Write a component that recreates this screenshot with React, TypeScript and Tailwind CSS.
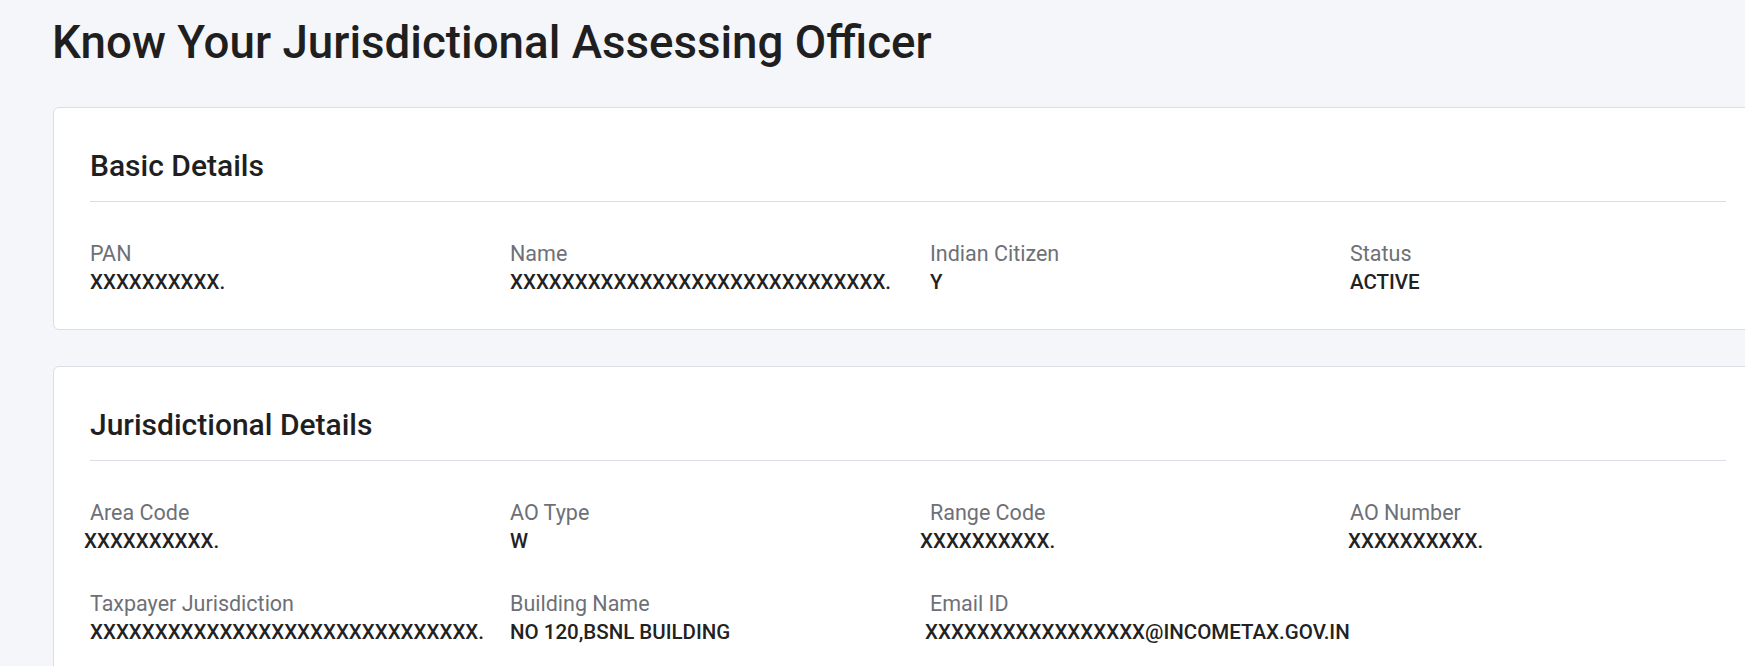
type Field = {
  label: string;
  value: string;
  shift?: string;
};

const basic: Field[] = [
  { label: "PAN", value: "XXXXXXXXXX." },
  { label: "Name", value: "XXXXXXXXXXXXXXXXXXXXXXXXXXXXX." },
  { label: "Indian Citizen", value: "Y" },
  { label: "Status", value: "ACTIVE" },
];

const jurisdiction: Field[] = [
  { label: "Area Code", value: "XXXXXXXXXX.", shift: "-ml-[6px]" },
  { label: "AO Type", value: "W" },
  { label: "Range Code", value: "XXXXXXXXXX.", shift: "-ml-[10px]" },
  { label: "AO Number", value: "XXXXXXXXXX.", shift: "-ml-[2px]" },
  { label: "Taxpayer Jurisdiction", value: "XXXXXXXXXXXXXXXXXXXXXXXXXXXXXX." },
  { label: "Building Name", value: "NO 120,BSNL BUILDING" },
  { label: "Email ID", value: "XXXXXXXXXXXXXXXXX@INCOMETAX.GOV.IN", shift: "-ml-[5px]" },
];

function Card({ title, fields }: { title: string; fields: Field[] }) {
  return (
    <section className="w-[1710px] rounded-md border border-[#dcdde7] bg-white px-[36px] pt-[40px] pb-[35px]">
      <h2 className="text-[30px] leading-[36px] font-medium text-[#1f1f1f]">{title}</h2>
      <div className="mt-[17px] h-px bg-[#dcdde8]" />
      <div className="mt-[39px] grid grid-cols-[420px_420px_420px_420px] gap-y-[38px]">
        {fields.map((f) => (
          <div key={f.label}>
            <div className="text-[21.5px] leading-[26px] font-normal text-[#6e7077]">{f.label}</div>
            <div
              className={`mt-[3px] whitespace-nowrap text-[20.5px] leading-6 font-medium text-[#222222] ${f.shift ?? ""}`}
            >
              {f.value}
            </div>
          </div>
        ))}
      </div>
    </section>
  );
}

export default function App() {
  return (
    <div
      className="min-h-screen w-full overflow-hidden bg-[#f5f6fa]"
      style={{ fontFamily: "Roboto, 'Noto Sans', sans-serif" }}
    >
      <div className="w-[1800px] pl-[52px] pt-[16px] pb-10">
        <h1 className="text-[45.7px] leading-[54px] font-medium text-[#1f1f1f]">
          Know Your Jurisdictional Assessing Officer
        </h1>
        <div className="mt-[37px] pl-px">
          <Card title="Basic Details" fields={basic} />
        </div>
        <div className="mt-[36px] pl-px">
          <Card title="Jurisdictional Details" fields={jurisdiction} />
        </div>
      </div>
    </div>
  );
}
